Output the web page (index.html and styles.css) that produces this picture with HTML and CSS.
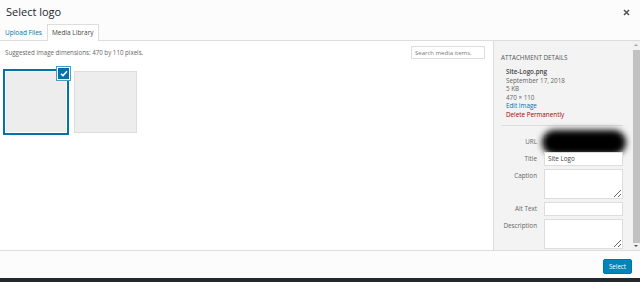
FILE: index.html
```html
<!DOCTYPE html>
<html lang="en">
<head>
    <meta charset="UTF-8">
    <meta name="viewport" content="width=device-width, initial-scale=1.0">
    <title>Select logo</title>
    <link rel="stylesheet" href="styles.css">
</head>
<body>
    <div class="modal">
        <div class="modal-head">
            <div class="title-row">
                <h1>Select logo</h1>
                <button class="close" aria-label="Close">
                    <svg width="7" height="7" viewBox="0 0 7 7"><path d="M1 1L6 6M6 1L1 6" stroke="#555" stroke-width="1.6"/></svg>
                </button>
            </div>
            <div class="tabs">
                <a class="tab-link">Upload Files</a>
                <a class="tab active">Media Library</a>
            </div>
        </div>

        <div class="main">
            <div class="browser">
                <div class="toolbar">
                    <span class="hint">Suggested image dimensions: 470 by 110 pixels.</span>
                    <input class="search" type="search" placeholder="Search media items...">
                </div>
                <ul class="attachments">
                    <li class="thumb selected">
                        <span class="check">
                            <svg width="8" height="7" viewBox="0 0 8 7"><path d="M1 3.8L3 5.6L7 1.2" fill="none" stroke="#fff" stroke-width="1.6"/></svg>
                        </span>
                    </li>
                    <li class="thumb"></li>
                </ul>
            </div>

            <div class="sidebar">
                <h2>Attachment Details</h2>
                <div class="details">
                    <div class="filename">Site-Logo.png</div>
                    <div>September 17, 2018</div>
                    <div>5 KB</div>
                    <div>470 × 110</div>
                    <a class="edit">Edit Image</a>
                    <a class="delete">Delete Permanently</a>
                </div>
                <div class="settings">
                    <label class="row url">
                        <span class="name">URL</span>
                        <input type="text">
                        <span class="redact"></span>
                    </label>
                    <label class="row">
                        <span class="name">Title</span>
                        <input type="text" value="Site Logo">
                    </label>
                    <label class="row">
                        <span class="name">Caption</span>
                        <textarea></textarea>
                    </label>
                    <label class="row">
                        <span class="name">Alt Text</span>
                        <input type="text">
                    </label>
                    <label class="row">
                        <span class="name">Description</span>
                        <textarea></textarea>
                    </label>
                </div>
            </div>

            <div class="scrollbar">
                <span class="arrow up"></span>
                <span class="bar"></span>
                <span class="arrow down"></span>
            </div>
        </div>

        <div class="modal-foot">
            <button class="select">Select</button>
        </div>
    </div>
    <div class="bottom-bar"></div>
</body>
</html>
```

FILE: styles.css
```css
body {
    margin: 0;
    width: 640px;
    height: 282px;
    overflow: hidden;
    font-family: "Open Sans", "DejaVu Sans", sans-serif;
    font-size: 6.5px;
    color: #444;
    background: #fcfcfc;
}
.modal {
    height: 278px;
    display: flex;
    flex-direction: column;
}
.modal-head {
    height: 40px;
    background: #fcfcfc;
    border-bottom: 1px solid #ddd;
}
.title-row {
    display: flex;
    justify-content: space-between;
    align-items: center;
    height: 24px;
}
h1 {
    margin: 0;
    padding: 0 6px;
    font-size: 11px;
    font-weight: 400;
    color: #23282d;
    line-height: 16px;
}
.close {
    border: none;
    background: none;
    padding: 0;
    margin-right: 10px;
    width: 7px;
    height: 7px;
    display: flex;
}
.tabs {
    display: flex;
    height: 17px;
    align-items: stretch;
}
.tab-link,
.tab {
    display: flex;
    align-items: center;
    line-height: 9px;
}
.tab-link {
    padding: 0 5px;
    color: #0073aa;
}
.tab {
    padding: 0 4px 1px;
    color: #444;
    background: #fff;
    border: 1px solid #ddd;
    border-bottom: none;
    height: 17px;
    box-sizing: border-box;
    margin-bottom: -1px;
}
.main {
    flex: 1;
    display: flex;
    background: #fff;
    min-height: 0;
}
.browser {
    flex: 1;
}
.toolbar {
    display: flex;
    justify-content: space-between;
    align-items: center;
    padding: 5px 8px 0 5px;
}
.hint {
    color: #666;
    font-size: 6.2px;
}
.search {
    width: 74px;
    height: 13px;
    box-sizing: border-box;
    border: 1px solid #ddd;
    padding: 0 3px;
    font-family: inherit;
    font-size: 6px;
    color: #444;
    background: #fff;
}
.search::placeholder {
    color: #777;
}
.attachments {
    list-style: none;
    margin: 10px 0 0;
    padding: 0 0 0 3px;
    display: flex;
    align-items: flex-start;
    gap: 5px;
}
.thumb {
    position: relative;
    width: 63px;
    height: 62px;
    margin-top: 2px;
    box-sizing: border-box;
    background: #ededed;
    border: 1px solid #ddd;
}
.thumb.selected {
    width: 66px;
    height: 66px;
    margin-top: 0;
    border: 2px solid #0073aa;
    box-shadow: inset 0 0 0 1px #fff;
}
.check {
    position: absolute;
    top: -4px;
    right: -3px;
    width: 11px;
    height: 11px;
    background: #0073aa;
    border: 1px solid #fff;
    box-shadow: 0 0 0 1px #4a9cc6;
    display: flex;
    align-items: center;
    justify-content: center;
}
.sidebar {
    width: 139px;
    background: #f3f3f3;
    border-left: 1px solid #ddd;
    padding: 12px 9px 0 7px;
    box-sizing: border-box;
    overflow: hidden;
}
h2 {
    margin: 0;
    font-size: 6.3px;
    font-weight: 400;
    text-transform: uppercase;
    color: #555;
    line-height: 9px;
}
.details {
    margin-top: 6px;
    padding: 0 0 5px 5px;
    border-bottom: 1px solid #ddd;
    line-height: 8.6px;
    color: #666;
    font-size: 6.3px;
}
.details a {
    display: block;
}
.filename {
    font-weight: 600;
    color: #444;
}
.edit {
    color: #0073aa;
}
.delete {
    color: #a00;
}
.settings {
    margin-top: 9px;
    display: flex;
    flex-direction: column;
    gap: 3px;
}
.row {
    position: relative;
    display: flex;
    align-items: flex-start;
    gap: 7px;
}
.name {
    width: 36px;
    flex: none;
    text-align: right;
    color: #666;
    line-height: 9px;
    padding-top: 2.5px;
    font-size: 6.3px;
}
.row input,
.row textarea {
    width: 79px;
    height: 14px;
    box-sizing: border-box;
    border: 1px solid #ddd;
    background: #fff;
    padding: 0 3px;
    margin: 0;
    font-family: inherit;
    font-size: 6.3px;
    color: #444;
}
.row textarea {
    height: 30px;
    resize: vertical;
}
.redact {
    position: absolute;
    left: 41px;
    top: -5px;
    width: 84px;
    height: 25px;
    border-radius: 13px;
    background: #000;
    filter: blur(3px);
}
.scrollbar {
    width: 8px;
    background: #f1f1f1;
    display: flex;
    flex-direction: column;
    align-items: center;
}
.arrow {
    width: 0;
    height: 0;
    border-left: 2px solid transparent;
    border-right: 2px solid transparent;
}
.arrow.up {
    margin: 3px 0 4px;
    border-bottom: 2px solid #a3a3a3;
}
.arrow.down {
    margin: 2px 0 3px;
    border-top: 2px solid #505050;
}
.bar {
    flex: 1;
    width: 7px;
    background: #c1c1c1;
}
.modal-foot {
    border-top: 1px solid #ddd;
    background: #fcfcfc;
    display: flex;
    justify-content: flex-end;
    align-items: flex-start;
    padding: 8px 8px 0 0;
    height: 19px;
}
.select {
    width: 29px;
    height: 15px;
    padding: 0;
    border: 1px solid #0073aa;
    border-radius: 2px;
    background: #0085ba;
    color: #fff;
    font-family: inherit;
    font-size: 6.2px;
}
.bottom-bar {
    height: 4px;
    background: #23282d;
}
```
